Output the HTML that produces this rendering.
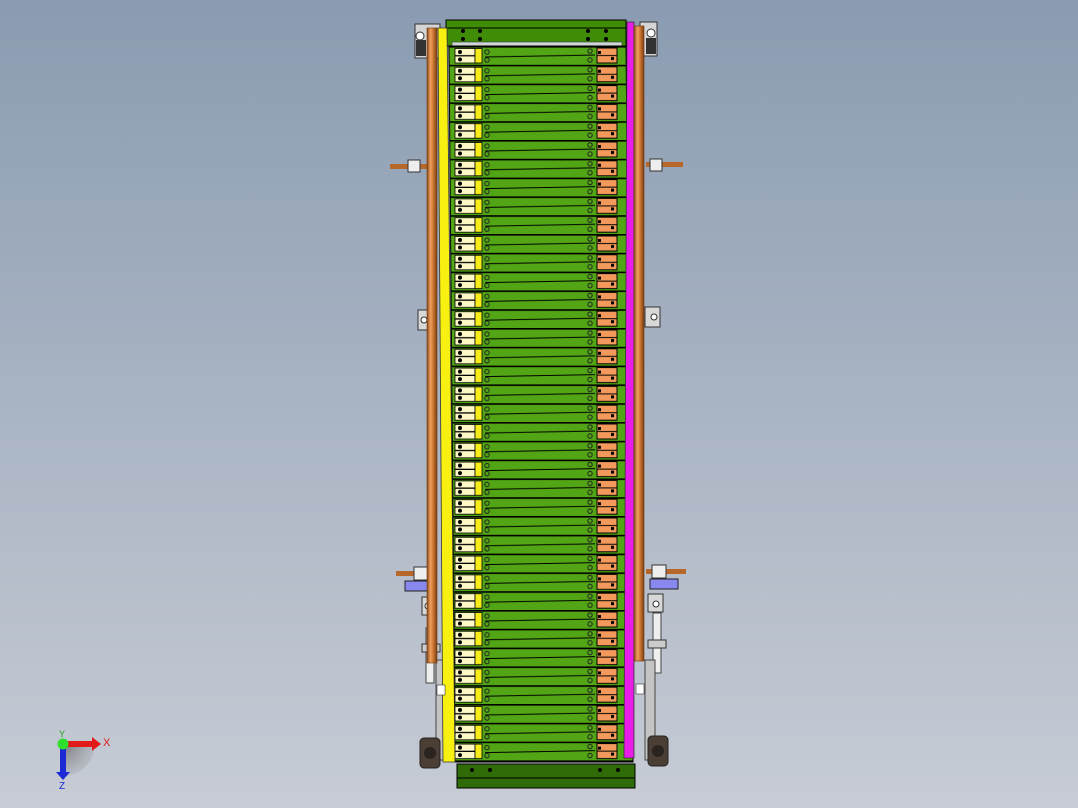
<!DOCTYPE html>
<html><head><meta charset="utf-8"><style>
html,body{margin:0;padding:0}
body{width:1078px;height:808px;overflow:hidden;background:linear-gradient(#8a9bb1 0%,#a9b4c3 50%,#c7ccd5 100%);font-family:"Liberation Sans",sans-serif}
</style></head><body>
<svg width="1078" height="808" viewBox="0 0 1078 808" xmlns="http://www.w3.org/2000/svg" style="position:absolute;left:0;top:0">
<defs>
<pattern id="rows" patternUnits="userSpaceOnUse" x="0" y="46" width="1078" height="18.8">
  <rect x="0" y="0" width="1078" height="18.8" fill="#52a514"/>
  <rect x="0" y="0" width="1078" height="1.6" fill="#000"/>
  <line x1="485" y1="11" x2="595" y2="9" stroke="#000" stroke-width="1"/>
  <rect x="455" y="2.5" width="20" height="7" fill="#fdf8c6" stroke="#000" stroke-width="0.8"/>
  <rect x="455" y="10" width="20" height="7" fill="#fdf8c6" stroke="#000" stroke-width="0.8"/>
  <rect x="475" y="2.5" width="7" height="14.5" fill="#f5ec1a" stroke="#000" stroke-width="0.8"/>
  <circle cx="460" cy="6" r="2" fill="#000"/><circle cx="460" cy="13.5" r="2" fill="#000"/>
  <circle cx="487" cy="6" r="2.2" fill="none" stroke="#222" stroke-width="1"/>
  <circle cx="487" cy="14" r="2.2" fill="none" stroke="#222" stroke-width="1"/>
  <circle cx="590" cy="5" r="2.2" fill="none" stroke="#222" stroke-width="1"/>
  <circle cx="590" cy="14" r="2.2" fill="none" stroke="#222" stroke-width="1"/>
  <rect x="597" y="2" width="20" height="15" fill="#f4995c" stroke="#000" stroke-width="1"/>
  <line x1="597" y1="9.5" x2="617" y2="9.5" stroke="#000"/>
  <rect x="598" y="5" width="3" height="3" fill="#000"/><rect x="611" y="11" width="3" height="3" fill="#000"/>
</pattern>
<linearGradient id="cu" x1="0" x2="1"><stop offset="0" stop-color="#8a4a18"/><stop offset="0.35" stop-color="#f0a060"/><stop offset="0.6" stop-color="#d07a35"/><stop offset="1" stop-color="#7a3e10"/></linearGradient>
<radialGradient id="sh" cx="0" cy="0" r="1"><stop offset="0" stop-color="#555" stop-opacity=".7"/><stop offset="1" stop-color="#888" stop-opacity=".2"/></radialGradient>
</defs>

<!-- side bolts -->
<rect x="390" y="164" width="40" height="5" fill="#b8672a"/>
<rect x="408" y="160" width="12" height="12" fill="#eee" stroke="#333"/>
<rect x="650" y="160" width="683" height="0" />
<rect x="646" y="162" width="37" height="5" fill="#b8672a"/>
<rect x="650" y="159" width="12" height="12" fill="#eee" stroke="#333"/>
<rect x="396" y="571" width="40" height="5" fill="#b8672a"/>
<rect x="414" y="567" width="14" height="13" fill="#eee" stroke="#333"/>
<rect x="405" y="581" width="28" height="10" fill="#8888ee" stroke="#222"/>
<rect x="646" y="569" width="40" height="5" fill="#b8672a"/>
<rect x="652" y="565" width="14" height="13" fill="#eee" stroke="#333"/>
<rect x="650" y="579" width="28" height="10" fill="#8888ee" stroke="#222"/>

<!-- tabs -->
<path d="M418 310 h14 v20 h-14 z" fill="#d8d8d8" stroke="#333"/><circle cx="424" cy="320" r="3" fill="#fff" stroke="#333"/>
<path d="M645 307 h15 v20 h-15 z" fill="#d8d8d8" stroke="#333"/><circle cx="654" cy="317" r="3" fill="#fff" stroke="#333"/>
<path d="M422 597 h14 v18 h-14 z" fill="#d8d8d8" stroke="#333"/><circle cx="428" cy="606" r="3" fill="#fff" stroke="#333"/>
<path d="M648 594 h15 v18 h-15 z" fill="#d8d8d8" stroke="#333"/><circle cx="656" cy="604" r="3" fill="#fff" stroke="#333"/>

<!-- lower posts -->
<rect x="426" y="628" width="8" height="55" fill="#eee" stroke="#444"/>
<rect x="422" y="644" width="18" height="8" fill="#ccc" stroke="#333"/>
<rect x="436" y="660" width="10" height="100" fill="#c4c4c4" stroke="#444"/>
<rect x="653" y="613" width="8" height="60" fill="#eee" stroke="#444"/>
<rect x="648" y="640" width="18" height="8" fill="#ccc" stroke="#333"/>
<rect x="645" y="660" width="10" height="100" fill="#c4c4c4" stroke="#444"/>

<!-- top brackets -->
<path d="M415 24 h25 v34 h-25 z" fill="#d5d5d5" stroke="#333"/>
<circle cx="420" cy="36" r="4" fill="#fff" stroke="#333"/>
<rect x="416" y="40" width="10" height="16" fill="#333"/>
<path d="M640 22 h17 v34 h-17 z" fill="#d5d5d5" stroke="#333"/>
<circle cx="651" cy="33" r="4" fill="#fff" stroke="#333"/>
<rect x="646" y="38" width="10" height="16" fill="#333"/>

<!-- wheels bottom -->
<rect x="420" y="738" width="20" height="30" rx="4" fill="#4a3e35" stroke="#222"/>
<circle cx="430" cy="753" r="6" fill="#2a2420"/>
<rect x="648" y="736" width="20" height="30" rx="4" fill="#4a3e35" stroke="#222"/>
<circle cx="658" cy="751" r="6" fill="#2a2420"/>

<!-- top board -->
<rect x="446" y="20" width="180" height="26" fill="#3f8c06" stroke="#000"/>
<line x1="446" y1="28" x2="626" y2="28" stroke="#000"/>
<rect x="452" y="42" width="170" height="5" fill="#cfd6d6" stroke="#333" stroke-width=".6"/>
<circle cx="463" cy="31" r="2" fill="#000"/><circle cx="480" cy="31" r="2" fill="#000"/><circle cx="588" cy="31" r="2" fill="#000"/><circle cx="606" cy="31" r="2" fill="#000"/>
<circle cx="463" cy="39" r="2" fill="#000"/><circle cx="480" cy="39" r="2" fill="#000"/><circle cx="588" cy="39" r="2" fill="#000"/><circle cx="606" cy="39" r="2" fill="#000"/>

<!-- main board stack -->
<path d="M449 46 L626 46 L633 762 L455 762 Z" fill="url(#rows)" stroke="#000" stroke-width="1"/>

<!-- bottom board -->
<rect x="457" y="764" width="178" height="24" fill="#2f6c08" stroke="#000"/>
<line x1="457" y1="778" x2="635" y2="778" stroke="#000"/>
<circle cx="472" cy="770" r="2" fill="#000"/><circle cx="490" cy="770" r="2" fill="#000"/><circle cx="600" cy="770" r="2" fill="#000"/><circle cx="618" cy="770" r="2" fill="#000"/>

<!-- yellow and magenta strips -->
<path d="M438 28 h9 l8 734 h-12 z" fill="#f7f010" stroke="#333" stroke-width=".8"/>
<rect x="437" y="685" width="8" height="10" fill="#fff" stroke="#333" stroke-width=".6"/>
<path d="M627 22 h7 v736 h-10 z" fill="#e81ee8" stroke="#333" stroke-width=".8"/>
<rect x="636" y="684" width="8" height="10" fill="#fff" stroke="#333" stroke-width=".6"/>

<!-- copper rods -->
<rect x="427" y="28" width="10" height="635" fill="url(#cu)" stroke="#6b3510" stroke-width=".6"/>
<rect x="634" y="26" width="10" height="635" fill="url(#cu)" stroke="#6b3510" stroke-width=".6"/>

<!-- triad -->
<path d="M63 744 L63 776 A32 32 0 0 0 95 744 Z" fill="url(#sh)"/>
<rect x="63" y="741" width="30" height="6" fill="#e21a1a"/>
<path d="M92 737 L101 744 L92 751 Z" fill="#e21a1a"/>
<rect x="60" y="744" width="6" height="30" fill="#1c2ad6"/>
<path d="M56 772 L63 780 L70 772 Z" fill="#1c2ad6"/>
<circle cx="63" cy="744" r="5.5" fill="#2ee02e"/>
<text x="103" y="746" font-size="11" fill="#e21a1a">X</text>
<text x="59" y="737" font-size="9" fill="#1aa01a">Y</text>
<text x="59" y="789" font-size="10" fill="#1c2ad6">Z</text>
</svg>
</body></html>
